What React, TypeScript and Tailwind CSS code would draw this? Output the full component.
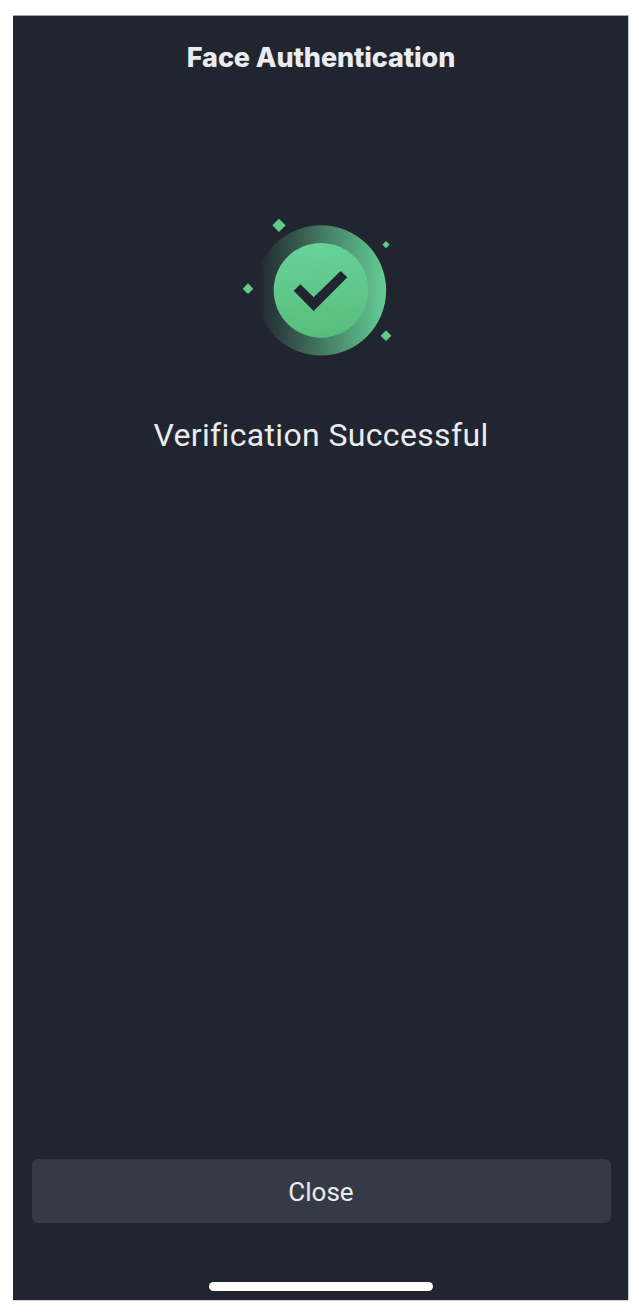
const SuccessIcon = () => (
  <svg className="h-[165px] w-[180px]" viewBox="0 0 540 495" fill="none" aria-hidden="true">
    <defs>
      <linearGradient id="ring" x1="82" y1="256" x2="469" y2="256" gradientUnits="userSpaceOnUse">
        <stop stopColor="#65CE96" stopOpacity="0" />
        <stop offset="1" stopColor="#65CE96" />
      </linearGradient>
      <linearGradient id="disc" x1="268" y1="113" x2="282" y2="398" gradientUnits="userSpaceOnUse">
        <stop stopColor="#68D29A" />
        <stop offset="1" stopColor="#58BD7C" />
      </linearGradient>
    </defs>
    <circle cx="273" cy="256" r="195.5" fill="url(#ring)" />
    <circle cx="273" cy="256" r="142" fill="url(#disc)" />
    <path d="M191 257L211 238L251 277L332 198L352 217L251 318Z" fill="#21252F" />
    <g fill="#5FCB8D">
      <path d="M147 41L167 61L147 81L127 61Z" />
      <path d="M468 108L479 119L468 130L457 119Z" />
      <path d="M54 235L70 251L54 267L38 251Z" />
      <path d="M468 376L484 392L468 408L452 392Z" />
    </g>
  </svg>
);

export default function App() {
  return (
    <div className="h-[1315px] w-[639px] bg-white pt-[15px] pl-[13px]">
      <main className="flex h-[1286px] w-[616px] flex-col items-center border-t border-r border-b border-t-[#a2a4a9] border-r-[#c9cace] border-b-[#d0d1d4] bg-[#21252f] pl-px text-[#eaecef]">
        <h1 className="mt-[25px] h-[34px] font-['Inter',sans-serif] text-[27px] leading-[34px] font-extrabold tracking-[-0.1px] whitespace-nowrap">
          Face Authentication
        </h1>

        <div className="mt-[130px] flex pr-[3px]">
          <SuccessIcon />
        </div>

        <p className="mt-[45px] h-[40px] font-['Roboto',sans-serif] text-[32px] leading-[40px] tracking-[0.35px] whitespace-nowrap">
          Verification Successful
        </p>

        <button
          type="button"
          className="mt-auto h-[64px] w-[579px] rounded-md bg-[#343a46] pt-0.5 font-['Roboto',sans-serif] text-[26px] leading-[32px]"
        >
          Close
        </button>

        {/* Home indicator */}
        <div className="mt-[59px] mb-[9px] h-[9px] w-[224px] rounded-full bg-white" />
      </main>
    </div>
  );
}
